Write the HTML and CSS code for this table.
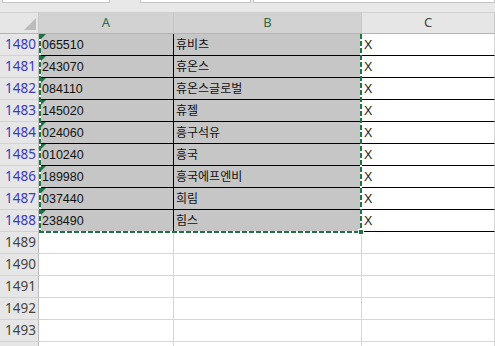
FILE: index.html
```html
<!DOCTYPE html>
<html lang="ko">
<head>
    <meta charset="UTF-8">
    <meta name="viewport" content="width=device-width, initial-scale=1.0">
    <title>Sheet1</title>
    <link rel="stylesheet" href="styles.css">
</head>
<body>
    <!-- name box / formula bar edges -->
    <div class="toolbar">
        <span class="field name-box"></span>
        <span class="field fx"></span>
        <span class="field formula"></span>
    </div>

    <div class="sheet">
        <div class="row head">
            <div class="corner"></div>
            <div class="col-head sel">A</div>
            <div class="col-head sel">B</div>
            <div class="col-head">C</div>
        </div>

        <div class="row picked"><div class="row-head">1480</div><div class="cell code">065510</div><div class="cell name">휴비츠</div><div class="cell mark">X</div></div>
        <div class="row picked"><div class="row-head">1481</div><div class="cell code">243070</div><div class="cell name">휴온스</div><div class="cell mark">X</div></div>
        <div class="row picked"><div class="row-head">1482</div><div class="cell code">084110</div><div class="cell name">휴온스글로벌</div><div class="cell mark">X</div></div>
        <div class="row picked"><div class="row-head">1483</div><div class="cell code">145020</div><div class="cell name">휴젤</div><div class="cell mark">X</div></div>
        <div class="row picked"><div class="row-head">1484</div><div class="cell code">024060</div><div class="cell name">흥구석유</div><div class="cell mark">X</div></div>
        <div class="row picked"><div class="row-head">1485</div><div class="cell code">010240</div><div class="cell name">흥국</div><div class="cell mark">X</div></div>
        <div class="row picked"><div class="row-head">1486</div><div class="cell code">189980</div><div class="cell name">흥국에프엔비</div><div class="cell mark">X</div></div>
        <div class="row picked"><div class="row-head">1487</div><div class="cell code">037440</div><div class="cell name">희림</div><div class="cell mark">X</div></div>
        <div class="row picked"><div class="row-head">1488</div><div class="cell code">238490</div><div class="cell name">힘스</div><div class="cell mark">X</div></div>

        <div class="row"><div class="row-head">1489</div><div class="cell"></div><div class="cell"></div><div class="cell"></div></div>
        <div class="row"><div class="row-head">1490</div><div class="cell"></div><div class="cell"></div><div class="cell"></div></div>
        <div class="row"><div class="row-head">1491</div><div class="cell"></div><div class="cell"></div><div class="cell"></div></div>
        <div class="row"><div class="row-head">1492</div><div class="cell"></div><div class="cell"></div><div class="cell"></div></div>
        <div class="row"><div class="row-head">1493</div><div class="cell"></div><div class="cell"></div><div class="cell"></div></div>
        <div class="row"><div class="row-head"></div><div class="cell"></div><div class="cell"></div><div class="cell"></div></div>

        <!-- copy range A1480:B1488 -->
        <div class="ants">
            <span class="edge left"></span>
            <span class="edge right"></span>
            <span class="edge bottom"></span>
            <span class="handle"></span>
        </div>
    </div>
</body>
</html>
```

FILE: styles.css
```css
body { margin: 0; background: #fff; overflow: hidden; font-family: "Liberation Sans", "Noto Sans CJK KR", sans-serif; }

.toolbar { height: 12px; background: #e8e8e8; position: relative; }
.field { position: absolute; top: 0; height: 2px; background: #fff; border: 1px solid #c4c4c4; border-top: none; }
.name-box { left: 2px; width: 106px; }
.fx { left: 140px; width: 109px; }
.formula { left: 253px; width: 240px; }

.sheet { position: relative; }
.row { display: grid; grid-template-columns: 39px 135px 188px 1fr; height: 22px; }
.row > div { box-sizing: border-box; height: 22px; }

.row.head > div { background: #e6e6e6; border-top: 1px solid #d0d0d0; border-bottom: 1px solid #b4b4b4; border-right: 1px solid #c6c6c6; }
.corner { position: relative; }
.corner::after { content: ""; position: absolute; right: 2px; bottom: 3px; border-style: solid; border-width: 0 0 12px 12px; border-color: transparent transparent #bcbcbc transparent; }
.col-head { font-family: "Noto Sans", sans-serif; font-size: 13px; color: #444; text-align: center; line-height: 19px; }
.row.head .col-head.sel { background: #d2d2d2; color: #2e6b47; }

.row-head { background: #e6e6e6; border-right: 1px solid #bdbdbd; border-bottom: 1px solid #d2d2d2; font-family: "Noto Sans", sans-serif; font-size: 13.5px; color: #444; text-align: right; padding-right: 2px; line-height: 20px; }
.picked .row-head { color: #3a3ab8; }

.cell { border-right: 1px solid #d6d6d6; border-bottom: 1px solid #d6d6d6; font-size: 12.5px; color: #111; padding-left: 3px; line-height: 22px; white-space: nowrap; overflow: hidden; }
.picked .cell { border-bottom-color: #000; }
.picked .code, .picked .name { background: #c6c6c6; }
.picked .code { border-right-color: #000; position: relative; }
.picked .name { padding-left: 2px; }
.cell.name { font-size: 12px; }
.cell.mark { padding-left: 2px; color: #222; }

/* number-stored-as-text marker */
.picked .code::before { content: ""; position: absolute; left: 1px; top: 0; border-style: solid; border-width: 6px 6px 0 0; border-color: #1f7040 transparent transparent transparent; }

.ants { position: absolute; left: 39px; top: 22px; width: 323px; height: 199px; pointer-events: none; }
.edge { position: absolute; }
.edge.left { left: 0; top: 0; bottom: 0; width: 2px; background: repeating-linear-gradient(180deg, #217346 0 5px, #fff 5px 7px); }
.edge.right { right: 0; top: 0; bottom: 0; width: 2px; background: repeating-linear-gradient(180deg, #217346 0 5px, #fff 5px 7px); }
.edge.bottom { left: 0; right: 0; bottom: 0; height: 2px; background: repeating-linear-gradient(90deg, #217346 0 5px, #fff 5px 7px); }
.handle { position: absolute; right: -2px; bottom: -2px; width: 4px; height: 4px; background: #217346; border: 1px solid #fff; }
```
